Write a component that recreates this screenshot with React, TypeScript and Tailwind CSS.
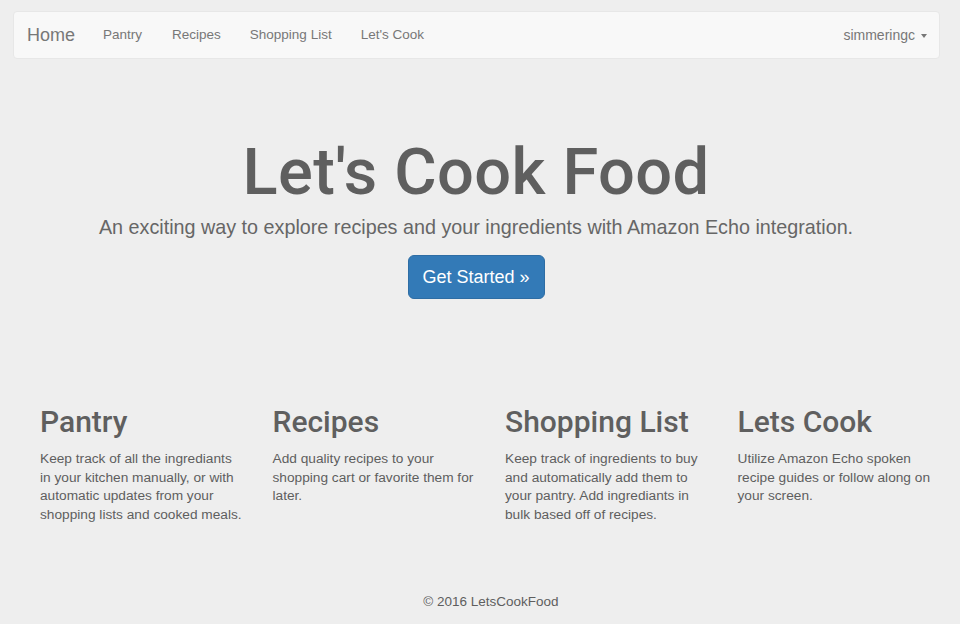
export default function App() {
  const features = [
    {
      title: 'Pantry',
      body: 'Keep track of all the ingrediants in your kitchen manually, or with automatic updates from your shopping lists and cooked meals.',
    },
    {
      title: 'Recipes',
      body: 'Add quality recipes to your shopping cart or favorite them for later.',
    },
    {
      title: 'Shopping List',
      body: 'Keep track of ingredients to buy and automatically add them to your pantry. Add ingrediants in bulk based off of recipes.',
    },
    {
      title: 'Lets Cook',
      body: 'Utilize Amazon Echo spoken recipe guides or follow along on your screen.',
    },
  ];

  return (
    <div className="min-h-[624px] bg-[#eeeeee] font-['Liberation_Sans',Arial,sans-serif] text-[#5e5e5e]">
      {/* Navbar */}
      <div className="pt-[11px] px-[13px] pr-[20px]">
        <nav className="h-[48px] flex items-center justify-between rounded-[4px] border border-[#e7e7e7] bg-[#f8f8f8]">
          <div className="flex items-center">
            <span className="pl-[13px] pr-[13px] text-[18px] text-[#777]">Home</span>
            <div className="flex items-center text-[13.5px] text-[#777]">
              <span className="px-[15px]">Pantry</span>
              <span className="px-[15px]">Recipes</span>
              <span className="px-[14px]">Shopping List</span>
              <span className="px-[15px]">Let's Cook</span>
            </div>
          </div>
          <div className="flex items-center gap-[6px] pr-[12px] text-[14px] text-[#777]">
            <span>simmeringc</span>
            <span className="mt-[1px] border-x-[3px] border-t-[4px] border-x-transparent border-t-[#777]" />
          </div>
        </nav>
      </div>

      {/* Jumbotron */}
      <section className="flex flex-col items-center pt-[73px] pr-[8px]">
        <h1 className="font-['Roboto',sans-serif] text-[65px] leading-[80px] font-medium tracking-[0.4px] text-[#5f5f5f]">
          Let's Cook Food
        </h1>
        <p className="mt-[2px] text-[19.75px] leading-[26px] text-[#666]">
          An exciting way to explore recipes and your ingredients with Amazon Echo integration.
        </p>
        <button className="mt-[15px] h-[44px] w-[137px] rounded-[6px] border border-[#2e6da4] bg-[#337ab7] text-[18px] text-white">
          Get Started »
        </button>
      </section>

      {/* Features */}
      <section className="grid grid-cols-[repeat(4,232.5px)] pl-[40px] pt-[103px]">
        {features.map((f) => (
          <div key={f.title} className="pr-[28px]">
            <h2 className="font-['Roboto',sans-serif] text-[30px] leading-[40px] font-medium text-[#5f5f5f]">{f.title}</h2>
            <p className="mt-[8px] text-[13.7px] leading-[18.5px] text-[#5e5e5e]">{f.body}</p>
          </div>
        ))}
      </section>

      {/* Footer */}
      <footer className="pt-[68px] pl-[22px] text-center text-[13.5px] text-[#5e5e5e]">© 2016 LetsCookFood</footer>
    </div>
  );
}
